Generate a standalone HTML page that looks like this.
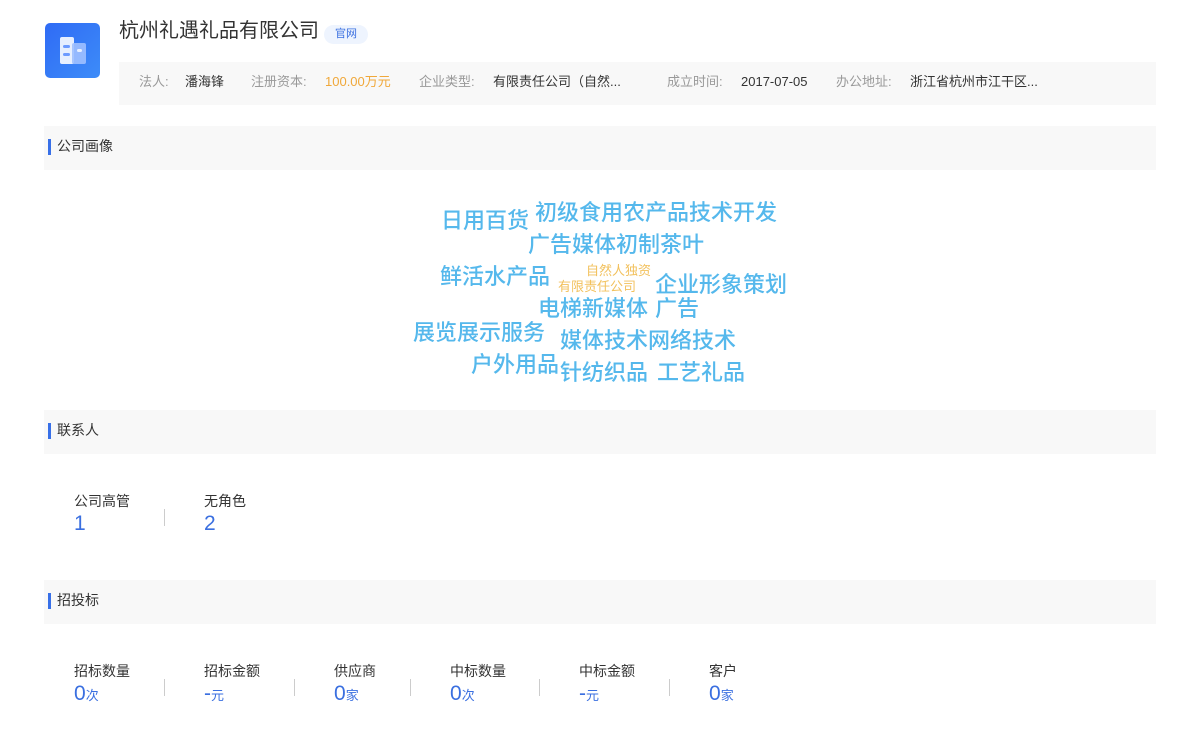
<!DOCTYPE html>
<html><head><meta charset="utf-8"><style>
*{margin:0;padding:0;box-sizing:border-box}
body{width:1200px;height:752px;background:#fff;font-family:"Liberation Sans","Noto Sans CJK SC",sans-serif;position:relative;overflow:hidden;color:#333}
.a{position:absolute;white-space:nowrap}
.logo{left:45px;top:23px;width:55px;height:55px;border-radius:5px;background:linear-gradient(135deg,#2f6bf5,#3d8cf8)}
.bar{left:119px;top:62px;width:1037px;height:43px;background:#f8f8f8}
.lab{color:#999;font-size:13px;top:74px;line-height:16px}
.val{color:#333;font-size:13px;top:74px;line-height:16px}
.sec{left:44px;width:1112px;height:44px;background:#f8f8f8}
.sec span{position:absolute;left:4px;top:13px;width:3px;height:16px;background:#3870e8}
.sec b{position:absolute;left:13px;top:11px;font-weight:normal;font-size:14px;color:#333;line-height:18px}
.w{position:absolute;white-space:nowrap;color:#55b8ec;font-size:22px;line-height:1;font-weight:500}
.o{color:#f2c15d;font-size:13px;font-weight:normal}
.sl{font-size:14px;color:#333;line-height:16px}
.sn{font-size:21px;color:#3a6fe0;line-height:24px}
.sn small{font-size:13px}
.dv{width:1px;height:17px;background:#ccc;top:679px}
</style></head><body>
<div class="a logo">
<svg width="55" height="55" viewBox="0 0 55 55"><rect x="15" y="14" width="14" height="27" rx="2" fill="#e6efff"/><rect x="27" y="20" width="14" height="21" rx="2" fill="#9fc0ff" opacity=".9"/><rect x="18" y="22" width="7" height="3" rx="1.5" fill="#6d9bff"/><rect x="18" y="30" width="7" height="3" rx="1.5" fill="#6d9bff"/><rect x="32" y="26" width="5" height="3" rx="1.5" fill="#e6efff"/></svg>
</div>
<div class="a" style="left:119px;top:18px;font-size:20px;color:#333;line-height:26px">杭州礼遇礼品有限公司</div>
<div class="a" style="left:324px;top:25px;width:44px;height:19px;border-radius:10px;background:#eef4fe;color:#3a6fe0;font-size:11px;text-align:center;line-height:19px">官网</div>
<div class="a bar"></div>
<div class="a lab" style="left:139px">法人:</div><div class="a val" style="left:185px">潘海锋</div>
<div class="a lab" style="left:251px">注册资本:</div><div class="a val" style="left:325px;color:#f0a83a">100.00万元</div>
<div class="a lab" style="left:419px">企业类型:</div><div class="a val" style="left:493px">有限责任公司（自然...</div>
<div class="a lab" style="left:667px">成立时间:</div><div class="a val" style="left:741px">2017-07-05</div>
<div class="a lab" style="left:836px">办公地址:</div><div class="a val" style="left:910px">浙江省杭州市江干区...</div>

<div class="a sec" style="top:126px"><span></span><b>公司画像</b></div>
<div class="w" style="left:441px;top:210px">日用百货</div>
<div class="w" style="left:535px;top:202px">初级食用农产品技术开发</div>
<div class="w" style="left:528px;top:234px">广告媒体初制茶叶</div>
<div class="w" style="left:440px;top:266px">鲜活水产品</div>
<div class="w o" style="left:586px;top:264px">自然人独资</div>
<div class="w o" style="left:558px;top:280px">有限责任公司</div>
<div class="w" style="left:655px;top:274px">企业形象策划</div>
<div class="w" style="left:538px;top:298px">电梯新媒体</div>
<div class="w" style="left:655px;top:298px">广告</div>
<div class="w" style="left:413px;top:322px">展览展示服务</div>
<div class="w" style="left:560px;top:330px">媒体技术网络技术</div>
<div class="w" style="left:471px;top:354px">户外用品</div>
<div class="w" style="left:560px;top:362px">针纺织品</div>
<div class="w" style="left:657px;top:362px">工艺礼品</div>

<div class="a sec" style="top:410px"><span></span><b>联系人</b></div>
<div class="a sl" style="left:74px;top:493px">公司高管</div><div class="a sn" style="left:74px;top:512px">1</div>
<div class="a dv" style="left:164px;top:509px"></div>
<div class="a sl" style="left:204px;top:493px">无角色</div><div class="a sn" style="left:204px;top:512px">2</div>

<div class="a sec" style="top:580px"><span></span><b>招投标</b></div>
<div class="a sl" style="left:74px;top:663px">招标数量</div><div class="a sn" style="left:74px;top:682px">0<small>次</small></div>
<div class="a dv" style="left:164px"></div>
<div class="a sl" style="left:204px;top:663px">招标金额</div><div class="a sn" style="left:204px;top:682px">-<small>元</small></div>
<div class="a dv" style="left:294px"></div>
<div class="a sl" style="left:334px;top:663px">供应商</div><div class="a sn" style="left:334px;top:682px">0<small>家</small></div>
<div class="a dv" style="left:410px"></div>
<div class="a sl" style="left:450px;top:663px">中标数量</div><div class="a sn" style="left:450px;top:682px">0<small>次</small></div>
<div class="a dv" style="left:539px"></div>
<div class="a sl" style="left:579px;top:663px">中标金额</div><div class="a sn" style="left:579px;top:682px">-<small>元</small></div>
<div class="a dv" style="left:669px"></div>
<div class="a sl" style="left:709px;top:663px">客户</div><div class="a sn" style="left:709px;top:682px">0<small>家</small></div>
</body></html>
